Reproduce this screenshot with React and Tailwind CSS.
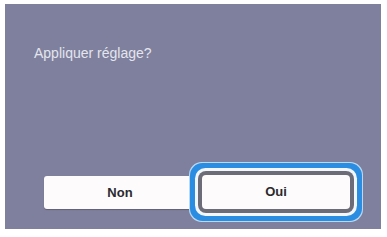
import React from 'react';

const App = () => {
  return (
    <div className="w-[387px] h-[237px] bg-white pt-[4px] pl-[5px] font-['Liberation_Sans',Arial,sans-serif]">
      <div className="w-[376px] h-[225px] bg-[#7e809d] flex flex-col">
        <p className="mt-[41px] ml-[29px] text-[14px] leading-[16px] text-[#e4e5ee]">Appliquer réglage?</p>

        <div className="mt-[115px] ml-[39px] flex gap-[6px]">
          <button className="w-[152px] h-[33px] rounded-[3px] bg-[#fdfbfb] shadow-[0_1px_1px_rgba(0,0,0,0.25)] text-[13px] font-bold text-[#2a2a2e]">
            Non
          </button>
          <button className="relative w-[148px] h-[34px] -mt-[1px] rounded-[4px] bg-[#fdfbfb] text-[13px] font-bold text-[#2a2a2e] shadow-[0_0_0_4px_#6c6c78,0_0_0_7px_#f3f7fc,0_0_0_12px_#2b8de2,0_0_0_13px_#b9d9f3]">
            Oui
          </button>
        </div>
      </div>
    </div>
  );
};

export default App;
